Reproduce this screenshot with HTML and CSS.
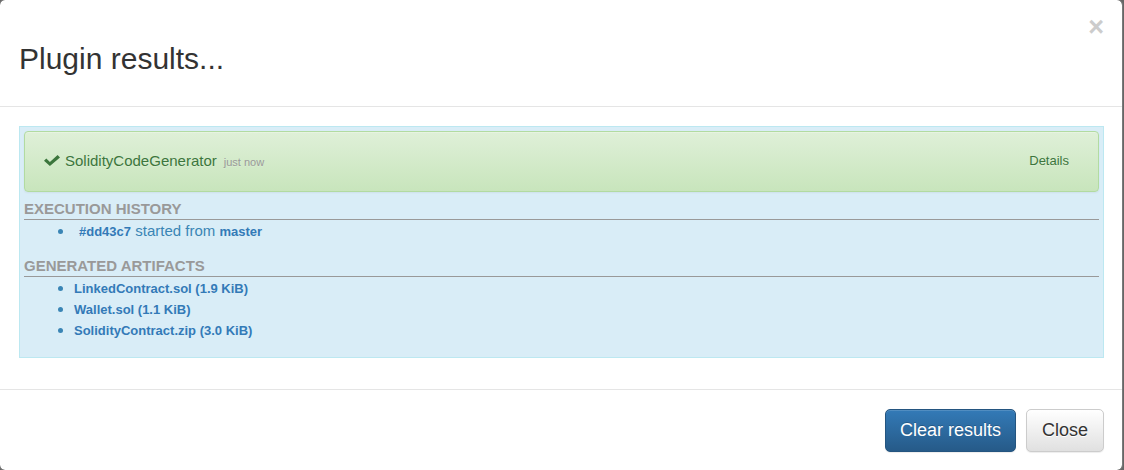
FILE: index.html
```html
<!DOCTYPE html>
<html>
<head>
<meta charset="utf-8">
<link rel="stylesheet" href="styles.css">
</head>
<body>
<div class="modal">
  <div class="modal-header">
    <h3 class="modal-title">Plugin results...</h3>
    <button class="close" type="button">×</button>
  </div>
  <div class="modal-body">
    <div class="panel">
      <div class="alert">
        <div class="alert-main">
          <svg class="check" width="16" height="11" viewBox="0 0 16 11"><polygon points="0,5.8 2.3,3.5 5.9,7 13.6,0 16,2.4 5.9,11" fill="#3c763d"/></svg>
          <span class="plugin-name">SolidityCodeGenerator</span><span class="time">just now</span>
        </div>
        <a class="details">Details</a>
      </div>
      <h4 class="section-title">Execution history</h4>
      <ul class="list">
        <li><a class="link hash">#dd43c7</a> started from <a class="link">master</a></li>
      </ul>
      <h4 class="section-title second">Generated artifacts</h4>
      <ul class="list">
        <li><a class="link">LinkedContract.sol (1.9 KiB)</a></li>
        <li><a class="link">Wallet.sol (1.1 KiB)</a></li>
        <li><a class="link">SolidityContract.zip (3.0 KiB)</a></li>
      </ul>
    </div>
  </div>
  <div class="modal-footer">
    <button class="btn btn-primary" type="button">Clear results</button>
    <button class="btn btn-default" type="button">Close</button>
  </div>
</div>
</body>
</html>
```
FILE: styles.css
```css
html, body {
  margin: 0;
  padding: 0;
}
body {
  background: #666;
  font-family: "Liberation Sans", Arial, sans-serif;
  color: #333;
  height: 470px;
  overflow: hidden;
}
.modal {
  box-sizing: border-box;
  width: 1124px;
  margin: -1px 0 0 -1px;
  background: #fff;
  background-clip: padding-box;
  border: 1px solid #7a7a7a;
  border-radius: 6px;
}
.modal-header {
  display: flex;
  justify-content: space-between;
  align-items: flex-start;
  padding: 0 18px 31px 19px;
  border-bottom: 1px solid #e5e5e5;
}
.modal-title {
  margin: 42px 0 0 0;
  font-size: 30px;
  line-height: 33px;
  font-weight: normal;
  color: #333;
}
.close {
  margin-top: 14px;
  padding: 0;
  border: 0;
  background: transparent;
  font-family: "Liberation Sans", Arial, sans-serif;
  font-size: 27px;
  font-weight: bold;
  line-height: 27px;
  color: #ccc;
  cursor: pointer;
}
.modal-body {
  padding: 19px 18px 31px 19px;
  border-bottom: 1px solid #e5e5e5;
}
.panel {
  background: #d9edf7;
  border: 1px solid #bce8f1;
  padding: 4px 4px 17px 4px;
}
.alert {
  box-sizing: border-box;
  height: 61px;
  display: flex;
  justify-content: space-between;
  align-items: center;
  padding: 0 29px 2px 19px;
  border: 1px solid #b2dba1;
  border-radius: 4px;
  background-image: linear-gradient(to bottom, #dff0d8 0, #c8e5bc 100%);
  box-shadow: inset 0 1px 0 rgba(255,255,255,.25), 0 1px 2px rgba(0,0,0,.05);
  color: #3c763d;
  text-shadow: 0 1px 0 rgba(255,255,255,.2);
}
.alert-main {
  display: flex;
  align-items: baseline;
  height: 21px;
}
.check {
  display: block;
  align-self: center;
  margin-right: 5px;
}
.plugin-name {
  font-size: 15px;
  line-height: 21px;
}
.time {
  font-size: 11px;
  line-height: 11px;
  color: #999;
  margin-left: 7px;
}
.details {
  font-size: 13px;
  line-height: 15px;
  color: #3c763d;
}
.section-title {
  margin: 7px 0 0 0;
  font-size: 15px;
  line-height: 20px;
  font-weight: bold;
  text-transform: uppercase;
  color: #999;
  border-bottom: 1px solid #999;
}
.section-title.second {
  margin-top: 15px;
}
.list {
  margin: 0;
  padding-left: 50px;
  font-size: 15px;
  line-height: 21px;
  color: #3a85b5;
}
.list li {
  height: 21px;
}
.link {
  font-size: 13px;
  line-height: 13px;
  font-weight: bold;
  color: #337ab7;
}
.hash {
  margin-left: 5px;
}
.modal-footer {
  display: flex;
  justify-content: flex-end;
  gap: 10px;
  padding: 19px 18px 18px 19px;
}
.btn {
  font-family: "Liberation Sans", Arial, sans-serif;
  font-size: 18px;
  line-height: 23px;
  padding: 9px 15px;
  border: 1px solid transparent;
  border-radius: 5px;
  cursor: pointer;
}
.btn-primary {
  padding: 9px 14px;
  color: #fff;
  background-image: linear-gradient(to bottom, #337ab7 0, #265a88 100%);
  border-color: #245580;
  text-shadow: 0 -1px 0 rgba(0,0,0,.2);
  box-shadow: inset 0 1px 0 rgba(255,255,255,.15), 0 1px 1px rgba(0,0,0,.075);
}
.btn-default {
  color: #333;
  background-image: linear-gradient(to bottom, #fff 0, #e0e0e0 100%);
  border-color: #ccc;
  text-shadow: 0 1px 0 #fff;
  box-shadow: inset 0 1px 0 rgba(255,255,255,.15), 0 1px 1px rgba(0,0,0,.075);
}
```
